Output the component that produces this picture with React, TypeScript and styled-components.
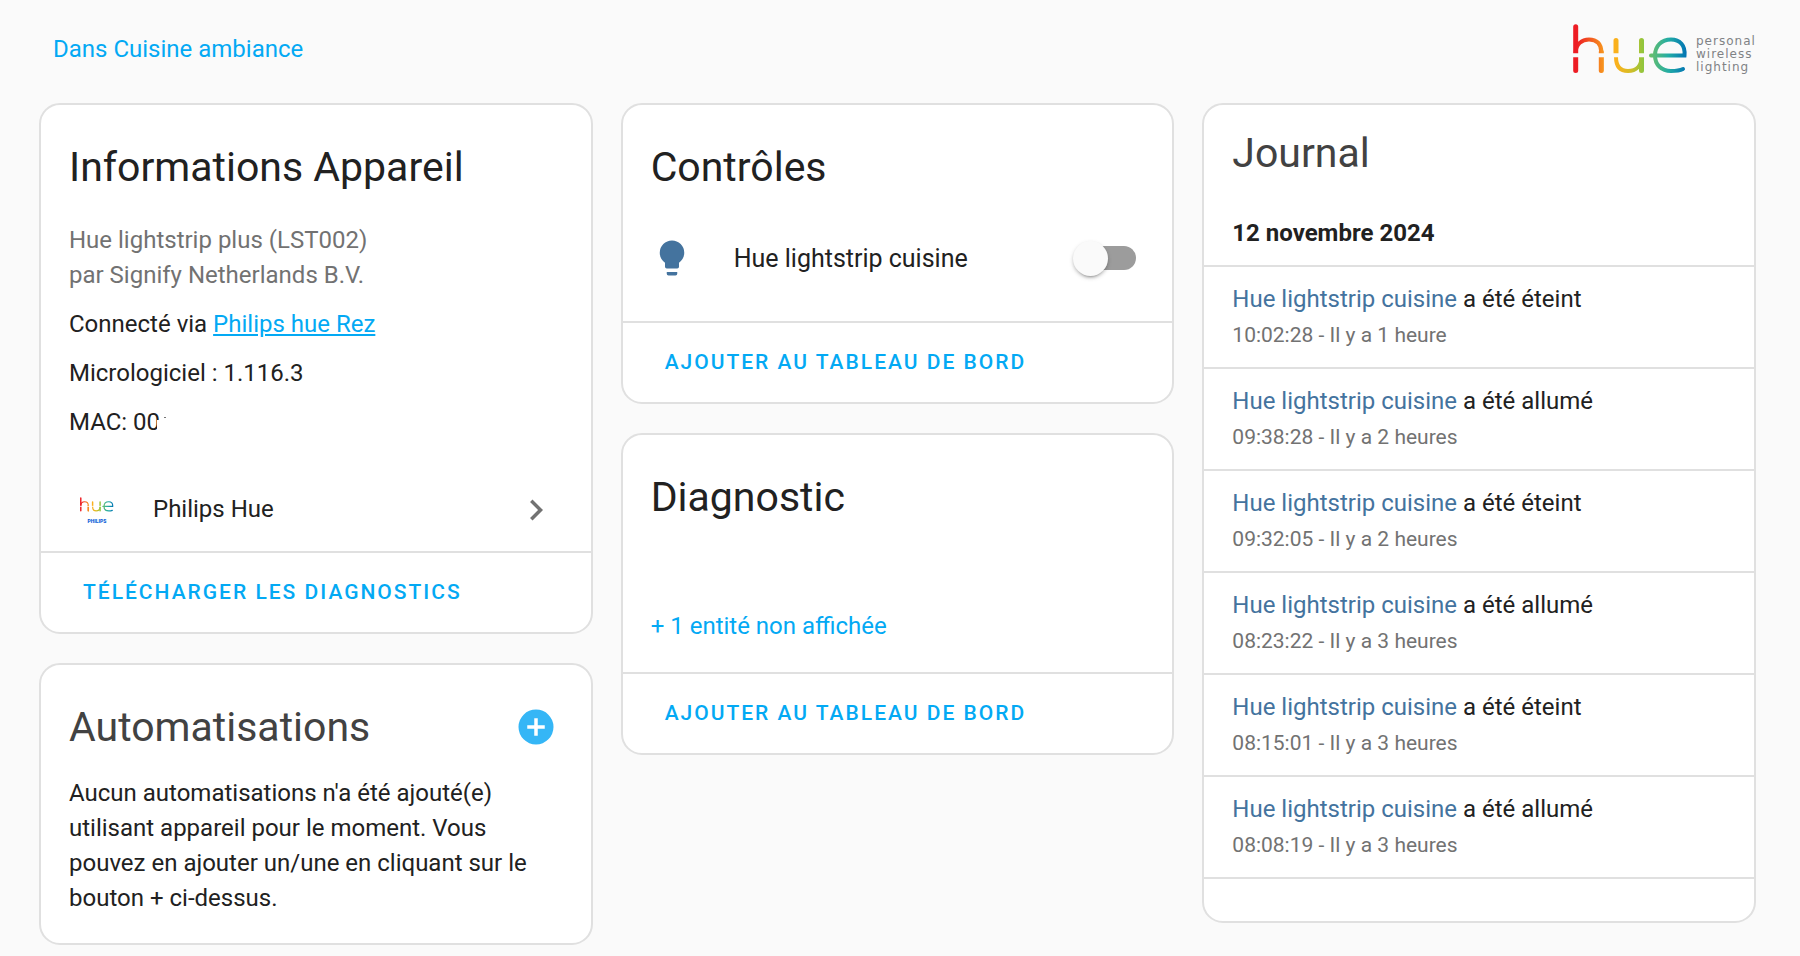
import React, { useId, useState } from 'react';
import styled, { createGlobalStyle } from 'styled-components';

const GlobalStyle = createGlobalStyle`
  *, *::before, *::after { box-sizing: border-box; }
  body {
    margin: 0;
    background: #fafafa;
    color: #212121;
    font-family: Roboto, "Liberation Sans", sans-serif;
    font-size: 24px;
    line-height: 35px;
    -webkit-font-smoothing: antialiased;
  }
  h2, p, ul { margin: 0; padding: 0; }
  ul { list-style: none; }
`;

const Page = styled.main`
  padding: 0 44px 11px 39px;
`;

const TopBar = styled.header`
  display: flex;
  justify-content: space-between;
  align-items: center;
  height: 103px;
  padding: 0 0 4px 14px;
`;

const PrimaryLink = styled.a<{ $underlined?: boolean }>`
  color: #03a9f4;
  text-decoration: ${(p) => (p.$underlined ? 'underline' : 'none')};
`;

const Columns = styled.div`
  display: grid;
  grid-template-columns: repeat(3, minmax(0, 1fr));
  gap: 28px;
  align-items: start;
`;

const Column = styled.div`
  display: flex;
  flex-direction: column;
  gap: 29px;
`;

const Card = styled.section`
  background: #fff;
  border: 2px solid #e0e0e0;
  border-radius: 21px;
`;

const CardTitle = styled.h2<{ $soft?: boolean }>`
  font-size: 41px;
  line-height: 84px;
  font-weight: 400;
  color: ${(p) => (p.$soft ? '#424242' : '#212121')};
`;

const CardHeader = styled.div<{ $compact?: boolean }>`
  display: flex;
  justify-content: space-between;
  align-items: center;
  padding: ${(p) => (p.$compact ? '6px 28px 0' : '20px 28px 0')};
`;

const CardBody = styled.div<{ $tight?: boolean }>`
  padding: ${(p) => (p.$tight ? '7px 28px 27px' : '14px 28px 28px')};
`;

const Model = styled.p`
  color: #727272;
`;

const Detail = styled.p`
  margin-top: 14px;
`;

/* Last visible digit of a masked address: its edge is wiped and a speck of the colon remains. */
const WipedDigit = styled.span`
  position: relative;

  &::before,
  &::after {
    content: '';
    position: absolute;
  }

  &::before {
    top: 12px;
    right: 0;
    width: 3px;
    height: 15px;
    background: #fff;
  }

  &::after {
    top: 9px;
    right: -6px;
    width: 2px;
    height: 1px;
    background: #757575;
  }
`;

const IntegrationRow = styled.a`
  display: flex;
  align-items: center;
  height: 83px;
  padding: 0 34px 0 38px;
  color: inherit;
  text-decoration: none;
`;

const RowLabel = styled.span`
  flex: 1;
`;

const BrandMark = styled.span`
  display: flex;
  flex-direction: column;
  align-items: center;
  gap: 4px;
  width: 36px;
  margin-right: 38px;
  padding-top: 2px;
`;

const CardActions = styled.div`
  display: flex;
  align-items: center;
  height: 81px;
  padding: 0 28px;
  border-top: 2px solid #e0e0e0;
`;

const TextButton = styled.button`
  height: 62px;
  padding: 0 14px;
  border: 0;
  background: none;
  color: #03a9f4;
  font: 500 21px/35px Roboto, "Liberation Sans", sans-serif;
  letter-spacing: 2px;
  text-transform: uppercase;
  cursor: pointer;
`;

const HiddenEntities = styled.div`
  padding-top: 56px;
`;

const LinkButton = styled.button`
  display: block;
  padding: 0;
  border: 0;
  background: none;
  color: #03a9f4;
  font: 400 24px/35px Roboto, "Liberation Sans", sans-serif;
  cursor: pointer;
`;

const IconButton = styled.button`
  display: flex;
  margin-right: 6px;
  padding: 0;
  border: 0;
  background: none;
  cursor: pointer;
`;

const EntityRow = styled.div`
  display: flex;
  align-items: center;
  height: 70px;
  padding-right: 8px;
  font-size: 25px;

  svg { margin-right: 41px; }
  label { flex: 1; }
`;

const Switch = styled.input`
  appearance: none;
  display: flex;
  align-items: center;
  width: 56px;
  height: 24px;
  margin: 0;
  border-radius: 12px;
  background: #9c9c9c;
  cursor: pointer;

  &::before {
    content: '';
    flex: none;
    width: 35px;
    height: 35px;
    margin-left: -7px;
    border-radius: 50%;
    background: #fafafa;
    box-shadow: 0 5px 2px -4px rgba(0, 0, 0, 0.2), 0 2px 3px rgba(0, 0, 0, 0.14),
      0 2px 5px rgba(0, 0, 0, 0.12);
  }

  &:checked { background: #81d4fa; justify-content: flex-end; }
`;

const LogDate = styled.p`
  padding: 21px 28px 14px;
  font-weight: 700;
`;

const LogList = styled.ul`
  padding-bottom: 42px;
  border-top: 2px solid #e0e0e0;
`;

const LogItem = styled.li`
  height: 102px;
  padding: 15px 28px 0;
  border-bottom: 2px solid #e0e0e0;
`;

const EntityLink = styled.a`
  color: #44739e;
  text-decoration: none;
`;

const LogTime = styled.time`
  display: block;
  padding-top: 1px;
  color: #727272;
  font-size: 21px;
`;

function HueLetters({ split = 4, background = '#fafafa' }: { split?: number; background?: string }) {
  const id = useId();
  return (
    <>
      <defs>
        <linearGradient id={`${id}h`} gradientUnits="userSpaceOnUse" x1="4" y1="0" x2="30" y2="0">
          <stop offset="0" stopColor="#ed1c24" />
          <stop offset="1" stopColor="#f7931e" />
        </linearGradient>
        <linearGradient id={`${id}u`} gradientUnits="userSpaceOnUse" x1="43" y1="0" x2="71" y2="0">
          <stop offset="0" stopColor="#fbb01c" />
          <stop offset="0.5" stopColor="#d7bd26" />
          <stop offset="1" stopColor="#8cc63f" />
        </linearGradient>
        <linearGradient id={`${id}e`} gradientUnits="userSpaceOnUse" x1="77" y1="0" x2="114" y2="0">
          <stop offset="0" stopColor="#6abf6a" />
          <stop offset="0.5" stopColor="#22aca5" />
          <stop offset="1" stopColor="#0072b5" />
        </linearGradient>
      </defs>
      <g fill="none" strokeWidth="5" strokeLinecap="round">
        <g stroke={`url(#${id}h)`}>
          <path d="M2.700 2.700V46.500" />
          <path d="M2.700 29C2.700 20 9 15.500 16 15.500C24 15.500 28.300 20 28.300 28V46.500" strokeWidth="4" />
          <path d="M28.300 28V46.500" />
        </g>
        <g stroke={`url(#${id}u)`}>
          <path d="M43 16.500V30M68.500 16.500V46.500" />
          <path d="M43 30V33C43 42 47 47 55 47C63 47 68.500 42 68.500 33" strokeWidth="4" />
        </g>
        <g stroke={`url(#${id}e)`} strokeWidth="4">
          <path d="M78 31.500H111.500C112.500 21.500 107 15.500 98 15.500C88.500 15.500 82 22 82 31.500C82 41 88.500 47 98 47C103 47 107 46.500 110 45" />
        </g>
      </g>
      <path d="M0 31.200H74" stroke={background} strokeWidth={split} />
    </>
  );
}

const LogoImage = styled.svg`
  display: block;
`;

function HueLogo() {
  return (
    <LogoImage width="183" height="52" viewBox="0 0 183 52" role="img" aria-label="hue personal wireless lighting">
      <HueLetters />
      <g fill="#808285" fontFamily='"DejaVu Sans", sans-serif' fontSize="12" letterSpacing="1">
        <text x="123" y="21">personal</text>
        <text x="123" y="34">wireless</text>
        <text x="123" y="47">lighting</text>
      </g>
    </LogoImage>
  );
}

const BrandName = styled.span`
  color: #0b5ed7;
  font-size: 5px;
  line-height: 8px;
  font-weight: 900;
`;

function HueBrand() {
  return (
    <BrandMark>
      <LogoImage width="34" height="17" viewBox="0 0 116 50" aria-hidden="true">
        <HueLetters split={3} background="#fff" />
      </LogoImage>
      <BrandName>PHILIPS</BrandName>
    </BrandMark>
  );
}

function BulbIcon() {
  return (
    <svg width="42" height="42" viewBox="0 0 24 24" fill="#44739e" aria-hidden="true">
      <path d="M12,2A7,7 0 0,0 5,9C5,11.380 6.190,13.470 8,14.740V17A1,1 0 0,0 9,18H15A1,1 0 0,0 16,17V14.740C17.810,13.470 19,11.380 19,9A7,7 0 0,0 12,2M9,21A1,1 0 0,0 10,22H14A1,1 0 0,0 15,21V20H9V21Z" />
    </svg>
  );
}

function ChevronIcon() {
  return (
    <svg width="42" height="42" viewBox="0 0 24 24" fill="#727272" aria-hidden="true">
      <path d="M8.590,16.580L13.170,12L8.590,7.410L10,6L16,12L10,18L8.590,16.580Z" />
    </svg>
  );
}

function PlusCircleIcon() {
  return (
    <svg width="42" height="42" viewBox="0 0 24 24" fill="#35b6f6" aria-hidden="true">
      <path d="M17,13H13V17H11V13H7V11H11V7H13V11H17M12,2A10,10 0 0,0 2,12A10,10 0 0,0 12,22A10,10 0 0,0 22,12A10,10 0 0,0 12,2Z" />
    </svg>
  );
}

const logEntries = [
  { time: '10:02:28', state: 'a été éteint', ago: 'Il y a 1 heure' },
  { time: '09:38:28', state: 'a été allumé', ago: 'Il y a 2 heures' },
  { time: '09:32:05', state: 'a été éteint', ago: 'Il y a 2 heures' },
  { time: '08:23:22', state: 'a été allumé', ago: 'Il y a 3 heures' },
  { time: '08:15:01', state: 'a été éteint', ago: 'Il y a 3 heures' },
  { time: '08:08:19', state: 'a été allumé', ago: 'Il y a 3 heures' },
];

export default function App() {
  const [on, setOn] = useState(false);
  return (
    <Page>
      <GlobalStyle />
      <TopBar>
        <PrimaryLink href="#area">Dans Cuisine ambiance</PrimaryLink>
        <HueLogo />
      </TopBar>
      <Columns>
        <Column>
          <Card>
            <CardHeader><CardTitle>Informations Appareil</CardTitle></CardHeader>
            <CardBody>
              <Model>Hue lightstrip plus (LST002)<br />par Signify Netherlands B.V.</Model>
              <Detail>Connecté via <PrimaryLink $underlined href="#bridge">Philips hue Rez</PrimaryLink></Detail>
              <Detail>Micrologiciel : 1.116.3</Detail>
              <Detail>MAC: 0<WipedDigit>0</WipedDigit></Detail>
            </CardBody>
            <IntegrationRow href="#integration">
              <HueBrand />
              <RowLabel>Philips Hue</RowLabel>
              <ChevronIcon />
            </IntegrationRow>
            <CardActions><TextButton>Télécharger les diagnostics</TextButton></CardActions>
          </Card>
          <Card>
            <CardHeader>
              <CardTitle $soft>Automatisations</CardTitle>
              <IconButton aria-label="Ajouter une automatisation"><PlusCircleIcon /></IconButton>
            </CardHeader>
            <CardBody $tight>
              <p>Aucun automatisations n'a été ajouté(e) utilisant appareil pour le moment. Vous pouvez en ajouter un/une en cliquant sur le bouton + ci-dessus.</p>
            </CardBody>
          </Card>
        </Column>
        <Column>
          <Card>
            <CardHeader><CardTitle>Contrôles</CardTitle></CardHeader>
            <CardBody>
              <EntityRow>
                <BulbIcon />
                <label htmlFor="strip">Hue lightstrip cuisine</label>
                <Switch id="strip" type="checkbox" role="switch" checked={on} onChange={(e) => setOn(e.target.checked)} />
              </EntityRow>
            </CardBody>
            <CardActions><TextButton>Ajouter au tableau de bord</TextButton></CardActions>
          </Card>
          <Card>
            <CardHeader><CardTitle>Diagnostic</CardTitle></CardHeader>
            <CardBody>
              <HiddenEntities>
                <LinkButton>+ 1 entité non affichée</LinkButton>
              </HiddenEntities>
            </CardBody>
            <CardActions><TextButton>Ajouter au tableau de bord</TextButton></CardActions>
          </Card>
        </Column>
        <Card>
          <CardHeader $compact><CardTitle $soft>Journal</CardTitle></CardHeader>
          <LogDate>12 novembre 2024</LogDate>
          <LogList>
            {logEntries.map((entry) => (
              <LogItem key={entry.time}>
                <EntityLink href="#entity">Hue lightstrip cuisine</EntityLink> {entry.state}
                <LogTime>{entry.time} - {entry.ago}</LogTime>
              </LogItem>
            ))}
          </LogList>
        </Card>
      </Columns>
    </Page>
  );
}
